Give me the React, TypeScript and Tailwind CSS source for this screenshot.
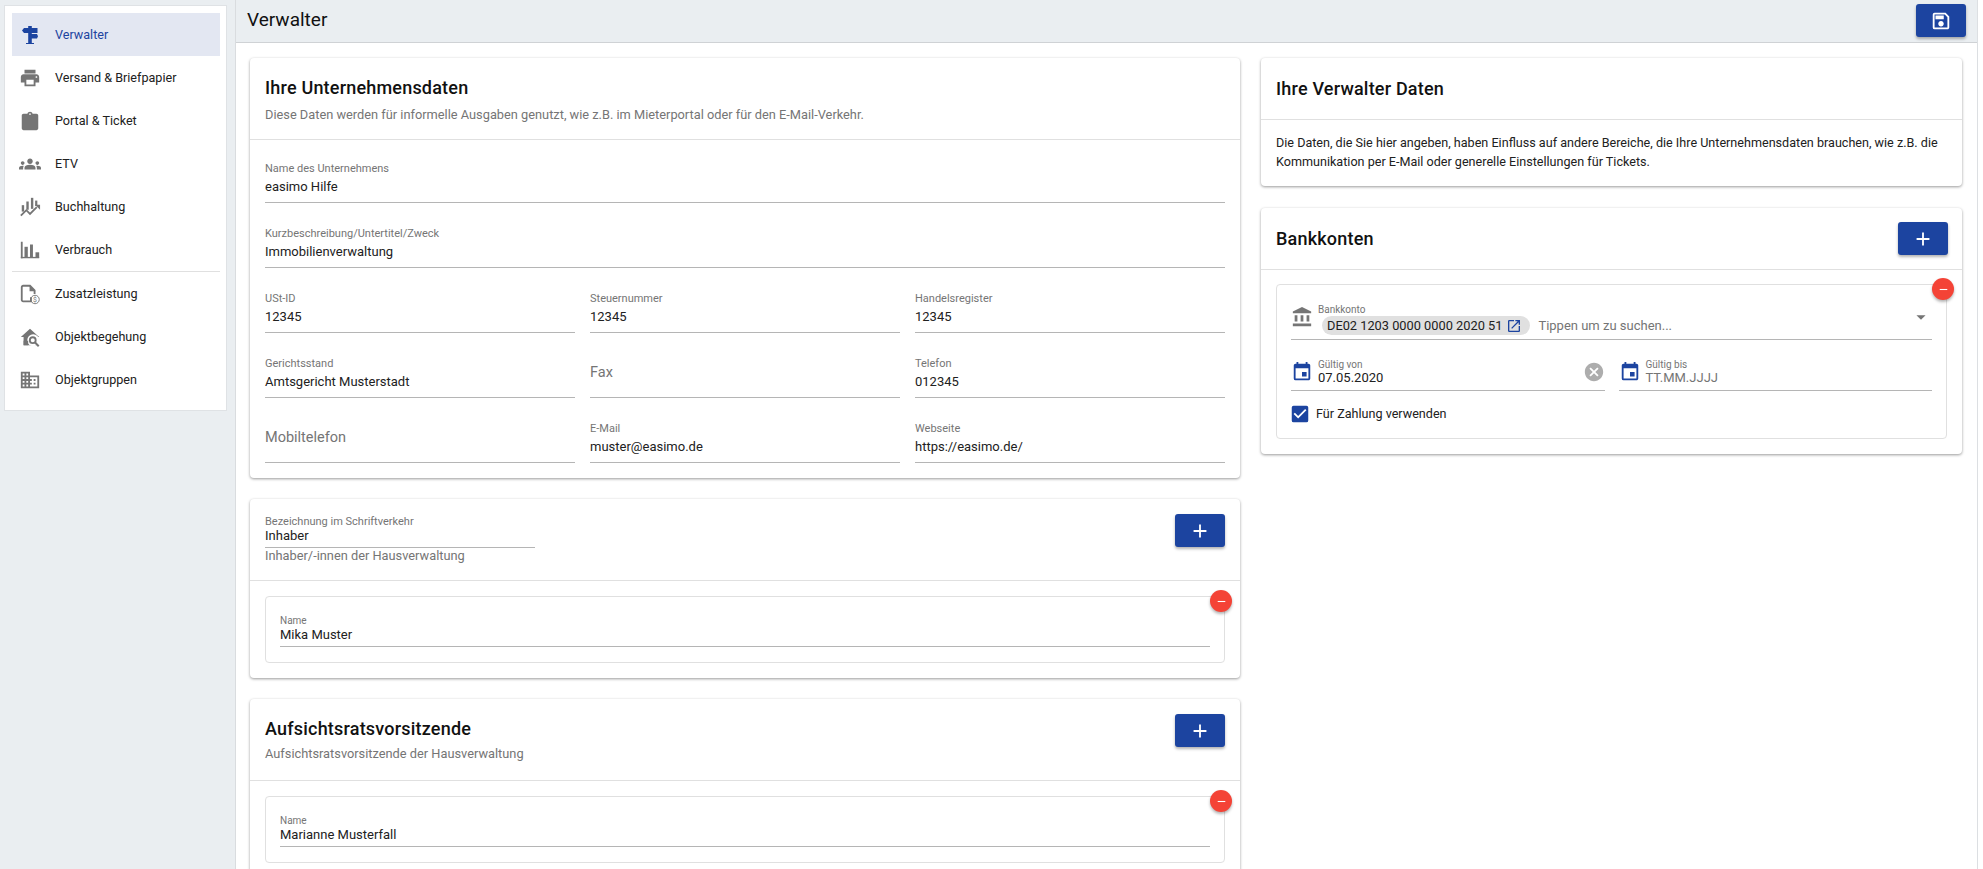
import { MdAdd, MdRemove, MdOutlineSave, MdPrint, MdGroups, MdAccountBalance, MdEvent, MdCancel, MdOpenInNew, MdCheckBox, MdArrowDropDown, MdDomain } from 'react-icons/md';
import type { ReactNode } from 'react';

// Material hat diese Icons nicht in der passenden Form, daher von Hand
const SignIcon = () => (
  <svg viewBox="0 0 16 18" width="16" height="18" fill="currentColor" className="ml-[3px]">
    <path d="M6.2 0h3.6v2H15.5v5H9.8v1H15l1 2.3-1 2.2H9.8V17H12v1H4v-1h2.2V7H2L0 4.5 2 2h4.2z" />
  </svg>
);

const ClipboardIcon = () => (
  <svg viewBox="0 0 24 24" width="1em" height="1em" fill="currentColor">
    <path fillRule="evenodd" d="M19 4h-4.2C14.4 2.8 13.3 2 12 2s-2.4.8-2.8 2H5c-1.1 0-2 .9-2 2v14c0 1.1.9 2 2 2h14c1.1 0 2-.9 2-2V6c0-1.1-.9-2-2-2zM12 3.6a.9.9 0 1 1 0 1.8.9.9 0 0 1 0-1.8z" />
  </svg>
);

const LedgerIcon = () => (
  <svg viewBox="0 0 24 24" width="1em" height="1em" fill="currentColor">
    <rect x="3" y="10" width="2.6" height="7" />
    <rect x="8" y="6" width="2.6" height="9" />
    <rect x="13" y="2" width="2.6" height="12" />
    <rect x="17.6" y="5" width="2.4" height="6" />
    <path d="M2 21.5 8 15.5l4 4 7.4-7.4" fill="none" stroke="currentColor" strokeWidth="2" />
    <path d="M23 9.5V15l-5.5-5.5z" />
  </svg>
);

const ConsumptionIcon = () => (
  <svg viewBox="0 0 24 24" width="1em" height="1em" fill="currentColor">
    <rect x="2" y="3" width="2" height="18" />
    <rect x="2" y="19.5" width="20" height="1.5" />
    <rect x="6" y="8.5" width="3.6" height="12" />
    <rect x="12" y="6" width="3.2" height="14" />
    <rect x="18" y="14.5" width="4" height="6" />
  </svg>
);

const InvoiceIcon = () => (
  <svg viewBox="0 0 24 24" width="1em" height="1em" fill="none">
    <path d="M13 15.5V20H4.5c-.8 0-1.5-.7-1.5-1.5v-14C3 3.700 3.700 3 4.500 3H12l5 5v4" stroke="currentColor" strokeWidth="2" />
    <path d="M11.500 3v6H18z" fill="currentColor" />
    <circle cx="17.500" cy="18" r="4.600" stroke="currentColor" strokeWidth="1" />
    <text x="17.500" y="20.600" textAnchor="middle" fontSize="7.500" fill="currentColor" fontFamily="Roboto, sans-serif">$</text>
  </svg>
);

const HouseSearchIcon = () => (
  <svg viewBox="0 0 24 24" width="1em" height="1em">
    <path d="M12 3 2 12h3v9h14v-9h3z" fill="currentColor" />
    <circle cx="15.500" cy="15.500" r="6.500" fill="#fff" />
    <rect x="5" y="16" width="5" height="5" fill="currentColor" />
    <circle cx="15" cy="15.500" r="3.200" fill="none" stroke="currentColor" strokeWidth="2" />
    <path d="m17.500 18 4 4" stroke="currentColor" strokeWidth="2.200" />
  </svg>
);

const menu = [
  { label: 'Verwalter', icon: <SignIcon />, active: true },
  { label: 'Versand & Briefpapier', icon: <MdPrint /> },
  { label: 'Portal & Ticket', icon: <ClipboardIcon /> },
  { label: 'ETV', icon: <MdGroups /> },
  { label: 'Buchhaltung', icon: <LedgerIcon /> },
  { label: 'Verbrauch', icon: <ConsumptionIcon />, divider: true },
  { label: 'Zusatzleistung', icon: <InvoiceIcon /> },
  { label: 'Objektbegehung', icon: <HouseSearchIcon /> },
  { label: 'Objektgruppen', icon: <MdDomain /> },
];

function Field({ label, value }: { label: string; value?: string }) {
  return (
    <div className="h-[50px] border-b border-[#b5b5b5]">
      {value ? (
        <div className="pt-[9px]">
          <div className="text-[11px] leading-[14px] text-[#757575]">{label}</div>
          <div className="text-[13px] leading-[18px] text-[#212121] mt-[2px]">{value}</div>
        </div>
      ) : (
        <div className="text-[14.500px] leading-[20px] text-[#757575] pt-[15px]">{label}</div>
      )}
    </div>
  );
}

function BlueButton({ children }: { children: ReactNode }) {
  return (
    <button className="w-[50px] h-[33px] shrink-0 rounded-[3px] bg-[#1c44a0] text-white text-[22px] flex items-center justify-center shadow-[0_2px_3px_rgba(0,0,0,0.3)]">
      {children}
    </button>
  );
}

function RemoveDot() {
  return (
    <div className="absolute right-[-8px] top-[-7px] w-[22px] h-[22px] rounded-full bg-[#f44336] text-white text-[13px] flex items-center justify-center shadow-[0_2px_3px_rgba(0,0,0,0.3)]">
      <MdRemove />
    </div>
  );
}

function Card({ children }: { children: ReactNode }) {
  return <div className="bg-white rounded-[4px] shadow-[0_1px_3px_rgba(0,0,0,0.4)]">{children}</div>;
}

function PersonBox({ value }: { value: string }) {
  return (
    <div className="relative border border-[#e0e0e0] rounded-[4px] h-[67px] px-[14px]">
      <RemoveDot />
      <div className="h-[50px] border-b border-[#b5b5b5] pt-[18px]">
        <div className="text-[10px] leading-[12px] text-[#757575]">Name</div>
        <div className="text-[13px] leading-[16px] text-[#212121]">{value}</div>
      </div>
    </div>
  );
}

export default function App() {
  return (
    <div className="flex h-[869px] w-[1983px] overflow-hidden bg-white pr-[5px]" style={{ fontFamily: 'Roboto, sans-serif' }}>
      <aside className="w-[236px] shrink-0 bg-[#eaeef1] border-r border-[#d9dcdf] pt-[5px] pl-[4px] pr-[8px]">
        <nav className="bg-white border border-[#dfe2e5] h-[406px] pl-[7px] pr-[6px] py-[7px]">
          {menu.map((m) => (
            <div key={m.label}>
              <div className={`h-[43px] flex items-center pl-[7px] ${m.active ? 'bg-[#e3e7f2] text-[#1c44a0]' : 'text-[#212121]'}`}>
                <span className={`text-[22px] w-[36px] shrink-0 ${m.active ? 'text-[#1c44a0]' : 'text-[#757575]'}`}>{m.icon}</span>
                <span className="text-[12.600px] pt-[2px]">{m.label}</span>
              </div>
              {m.divider && <div className="h-px bg-[#e0e0e0]" />}
            </div>
          ))}
        </nav>
      </aside>

      <main className="flex-1 min-w-0 flex flex-col border-r border-[#dcdfe2]">
        <header className="h-[43px] shrink-0 bg-[#eaeef1] border-b border-[#cfd2d5] flex items-start justify-between pl-[11px] pr-[11px] pt-[4px]">
          <h1 className="text-[19px] leading-[32px] text-[#111]">Verwalter</h1>
          <BlueButton><MdOutlineSave /></BlueButton>
        </header>

        <div className="flex-1 flex gap-[21px] pl-[14px] pr-[15px] pt-[15px] overflow-hidden">
          <div className="w-[990px] shrink-0 flex flex-col gap-[21px]">
            <Card>
              <div className="h-[82px] border-b border-[#e0e0e0] px-[15px] pt-[17px]">
                <h2 className="text-[18px] font-medium text-[#111] leading-[26px] tracking-[0.2px]">Ihre Unternehmensdaten</h2>
                <p className="text-[12.800px] text-[#757575] mt-[4px]">Diese Daten werden für informelle Ausgaben genutzt, wie z.B. im Mieterportal oder für den E-Mail-Verkehr.</p>
              </div>
              <div className="px-[15px] pt-[13px] pb-[15px] flex flex-col gap-[15px]">
                <Field label="Name des Unternehmens" value="easimo Hilfe" />
                <Field label="Kurzbeschreibung/Untertitel/Zweck" value="Immobilienverwaltung" />
                <div className="grid grid-cols-3 gap-[15px]">
                  <Field label="USt-ID" value="12345" />
                  <Field label="Steuernummer" value="12345" />
                  <Field label="Handelsregister" value="12345" />
                  <Field label="Gerichtsstand" value="Amtsgericht Musterstadt" />
                  <Field label="Fax" />
                  <Field label="Telefon" value="012345" />
                  <Field label="Mobiltelefon" />
                  <Field label="E-Mail" value="muster@easimo.de" />
                  <Field label="Webseite" value="https://easimo.de/" />
                </div>
              </div>
            </Card>

            <Card>
              <div className="h-[82px] border-b border-[#e0e0e0] px-[15px] pt-[15px] flex justify-between">
                <div className="w-[270px]">
                  <div className="text-[11px] leading-[12px] text-[#757575] pt-[2px]">Bezeichnung im Schriftverkehr</div>
                  <div className="text-[13px] leading-[16px] text-[#212121] border-b border-[#b5b5b5] pb-[3px]">Inhaber</div>
                  <div className="text-[12.800px] leading-[16px] text-[#757575]">Inhaber/-innen der Hausverwaltung</div>
                </div>
                <BlueButton><MdAdd /></BlueButton>
              </div>
              <div className="p-[15px]"><PersonBox value="Mika Muster" /></div>
            </Card>

            <Card>
              <div className="h-[82px] border-b border-[#e0e0e0] px-[15px] pt-[15px] flex justify-between">
                <div className="pt-[2px]">
                  <h2 className="text-[18px] font-medium text-[#111] leading-[26px] tracking-[0.2px]">Aufsichtsratsvorsitzende</h2>
                  <p className="text-[12.800px] text-[#757575] mt-[2px]">Aufsichtsratsvorsitzende der Hausverwaltung</p>
                </div>
                <BlueButton><MdAdd /></BlueButton>
              </div>
              <div className="p-[15px]"><PersonBox value="Marianne Musterfall" /></div>
            </Card>
          </div>

          <div className="flex-1 min-w-0 flex flex-col gap-[22px]">
            <Card>
              <div className="h-[62px] border-b border-[#e0e0e0] px-[15px] flex items-center">
                <h2 className="text-[18px] font-medium text-[#111] tracking-[0.2px]">Ihre Verwalter Daten</h2>
              </div>
              <p className="text-[12.600px] leading-[19px] text-[#212121] px-[15px] pt-[13px] pb-[15px]">
                Die Daten, die Sie hier angeben, haben Einfluss auf andere Bereiche, die Ihre Unternehmensdaten brauchen, wie z.B. die Kommunikation per E-Mail oder generelle Einstellungen für Tickets.
              </p>
            </Card>

            <Card>
              <div className="h-[62px] border-b border-[#e0e0e0] pl-[15px] pr-[14px] flex items-center justify-between">
                <h2 className="text-[18px] font-medium text-[#111] tracking-[0.2px]">Bankkonten</h2>
                <BlueButton><MdAdd /></BlueButton>
              </div>
              <div className="px-[15px] pt-[14px] pb-[15px]">
                <div className="relative border border-[#e0e0e0] rounded-[4px] h-[155px] px-[14px] pt-[19px]">
                  <RemoveDot />
                  <div className="relative h-[36px] border-b border-[#b5b5b5] flex">
                    <MdAccountBalance className="text-[22px] text-[#757575] shrink-0 mt-[2px] mr-[5px]" />
                    <div className="flex-1 min-w-0">
                      <div className="text-[10px] leading-[12px] text-[#757575]">Bankkonto</div>
                      <div className="flex items-center">
                        <span className="h-[19px] rounded-full bg-[#e0e0e0] flex items-center gap-[4px] pl-[5px] pr-[8px] ml-[4px] text-[12.800px] text-[#212121]">
                          DE02 1203 0000 0000 2020 51
                          <MdOpenInNew className="text-[16px] text-[#1c44a0]" />
                        </span>
                        <span className="text-[13px] text-[#757575] ml-[8px]">Tippen um zu suchen...</span>
                      </div>
                    </div>
                    <MdArrowDropDown className="absolute right-0 top-[2px] text-[22px] text-[#757575]" />
                  </div>
                  <div className="grid grid-cols-2 gap-x-[14px] mt-[15px]">
                    <div className="relative h-[36px] border-b border-[#b5b5b5] flex">
                      <MdEvent className="text-[22px] text-[#1c44a0] shrink-0 mt-[6px] mr-[5px]" />
                      <div className="pt-[4px]">
                        <div className="text-[10px] leading-[12px] text-[#757575]">Gültig von</div>
                        <div className="text-[13px] leading-[13px] text-[#212121]">07.05.2020</div>
                      </div>
                      <MdCancel className="absolute right-0 top-[6px] text-[22px] text-[#adadad]" />
                    </div>
                    <div className="h-[36px] border-b border-[#b5b5b5] flex">
                      <MdEvent className="text-[22px] text-[#1c44a0] shrink-0 mt-[6px] mr-[5px]" />
                      <div className="pt-[4px]">
                        <div className="text-[10px] leading-[12px] text-[#757575]">Gültig bis</div>
                        <div className="text-[13px] leading-[13px] text-[#757575]">TT.MM.JJJJ</div>
                      </div>
                    </div>
                  </div>
                  <div className="flex items-center mt-[12px] -ml-[2px]">
                    <MdCheckBox className="text-[22px] text-[#1c44a0] shrink-0" />
                    <span className="text-[12.600px] text-[#212121] ml-[5px]">Für Zahlung verwenden</span>
                  </div>
                </div>
              </div>
            </Card>
          </div>
        </div>
      </main>
    </div>
  );
}
